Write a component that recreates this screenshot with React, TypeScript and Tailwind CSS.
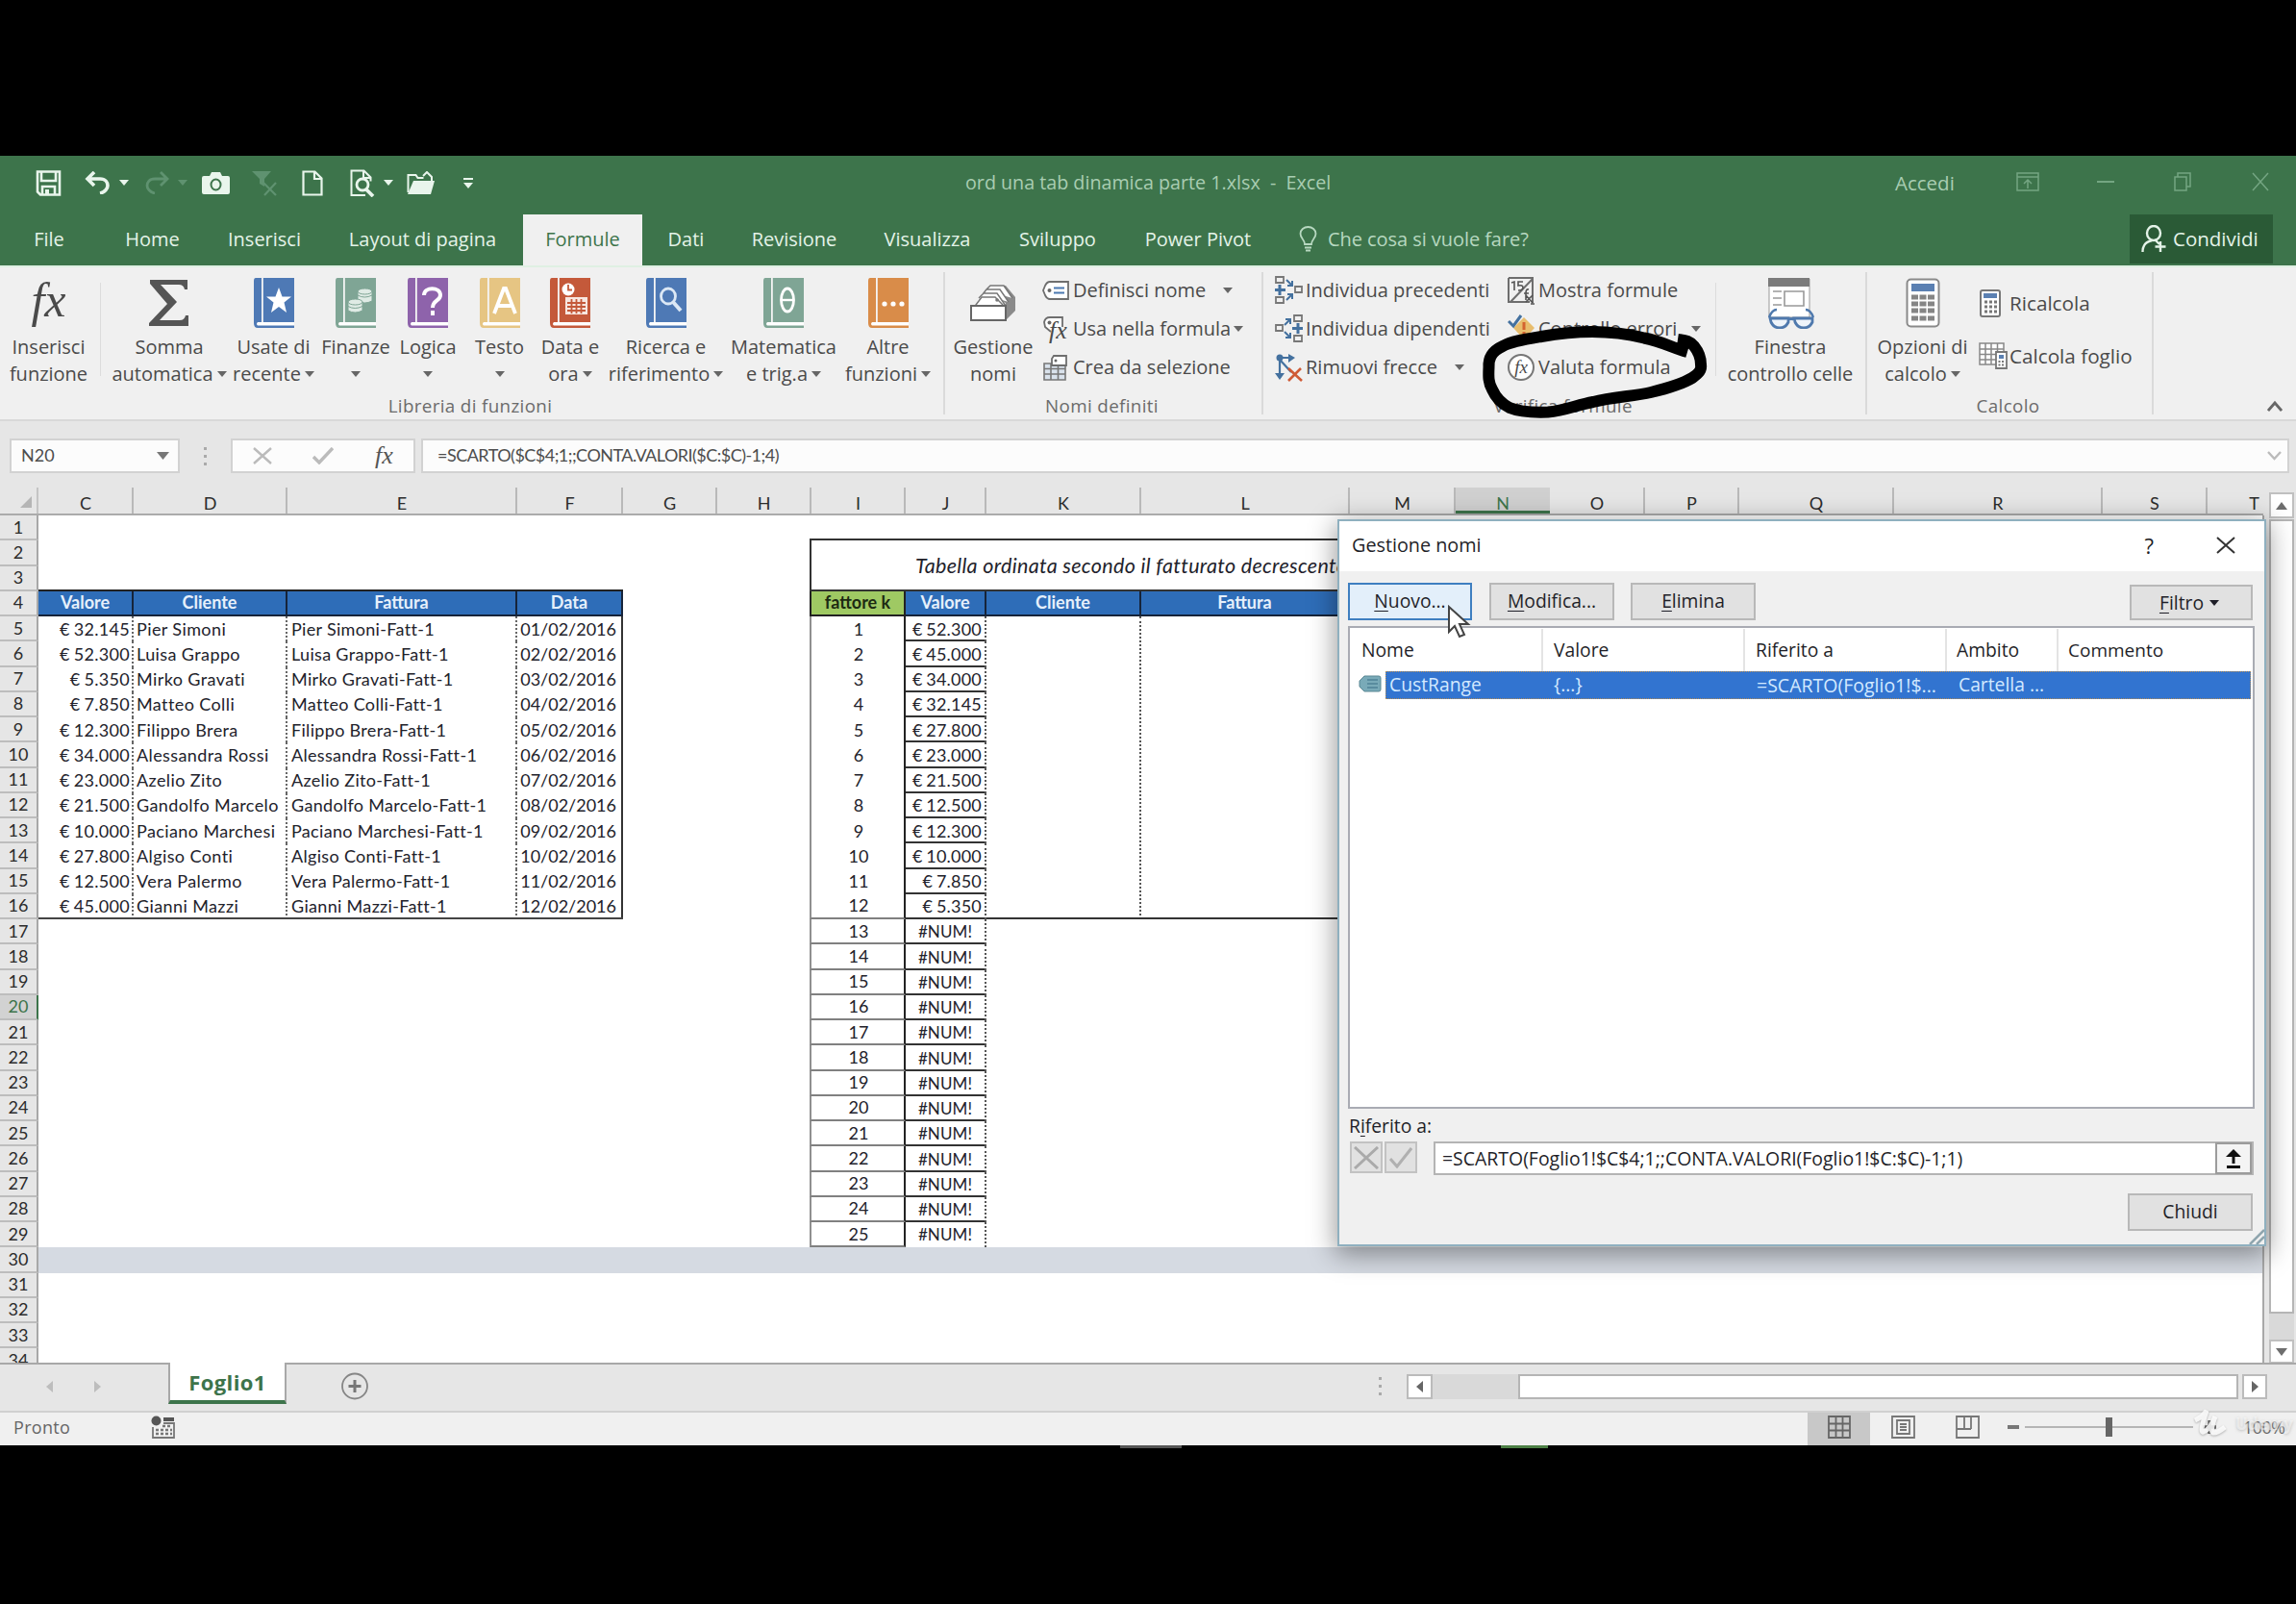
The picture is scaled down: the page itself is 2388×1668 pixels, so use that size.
import type { ReactNode } from "react";

const clients = [
  ["32.145", "Pier Simoni", "01"],
  ["52.300", "Luisa Grappo", "02"],
  ["5.350", "Mirko Gravati", "03"],
  ["7.850", "Matteo Colli", "04"],
  ["12.300", "Filippo Brera", "05"],
  ["34.000", "Alessandra Rossi", "06"],
  ["23.000", "Azelio Zito", "07"],
  ["21.500", "Gandolfo Marcelo", "08"],
  ["10.000", "Paciano Marchesi", "09"],
  ["27.800", "Algiso Conti", "10"],
  ["12.500", "Vera Palermo", "11"],
  ["45.000", "Gianni Mazzi", "12"],
];

const sorted = [
  "52.300",
  "45.000",
  "34.000",
  "32.145",
  "27.800",
  "23.000",
  "21.500",
  "12.500",
  "12.300",
  "10.000",
  "7.850",
  "5.350",
];

const columns = "CDEFGHIJKLMNOPQRST".split("");

const gridCols =
  "grid grid-cols-[40px_99px_160px_239px_110px_98px_98px_98px_84px_161px_217px_110px_98px_99px_98px_161px_217px_109px_58px]";

function Caret({ className = "" }: { className?: string }) {
  return (
    <svg
      width="10"
      height="6"
      viewBox="0 0 10 6"
      className={`shrink-0 ${className}`}
    >
      <path d="M0 0h10L5 6z" fill="currentColor" />
    </svg>
  );
}

/* ---------- title bar ---------- */

function TitleBar() {
  return (
    <div className="flex h-[61px] shrink-0 items-center pb-[5px] text-[#e9f5ec]">
      <div className="flex w-[1004px] items-center pl-[37px]">
        <svg width="27" height="27" viewBox="0 0 27 27" fill="none">
          <path
            d="M2 1.5h23v24H5l-3-3zM6 2v9h15V2M7 25v-8h13v8"
            stroke="currentColor"
            strokeWidth="2.6"
          />
          <path d="M10 20h4v5h-4z" fill="currentColor" />
        </svg>
        <svg
          width="27"
          height="24"
          viewBox="0 0 27 24"
          fill="none"
          className="ml-[24px]"
        >
          <path
            d="M10 1L3 8l7 7M4 8h12c6 0 8 4 8 7s-3 7-8 8"
            stroke="currentColor"
            strokeWidth="3.6"
          />
        </svg>
        <Caret className="ml-[9px]" />
        <svg
          width="27"
          height="24"
          viewBox="0 0 27 24"
          fill="none"
          className="ml-[16px] text-[#5f9270]"
        >
          <path
            d="M17 1l7 7-7 7M23 8H11C5 8 3 12 3 15s3 7 8 8"
            stroke="currentColor"
            strokeWidth="2.8"
          />
        </svg>
        <Caret className="ml-[8px] text-[#5f9270]" />
        <svg width="29" height="23" viewBox="0 0 29 23" className="ml-[15px]">
          <path
            d="M2 4h6l2-4h9l2 4h6q2 0 2 2v15q0 2-2 2H2q-2 0-2-2V6q0-2 2-2z"
            fill="currentColor"
          />
          <ellipse
            cx="14.5"
            cy="13"
            rx="5"
            ry="5.5"
            fill="none"
            stroke="#3d744b"
            strokeWidth="2"
          />
        </svg>
        <svg
          width="28"
          height="27"
          viewBox="0 0 28 27"
          className="ml-[22px] text-[#5f9270]"
        >
          <path d="M1 1h20l-7 8v8l-5-3V9z" fill="currentColor" />
          <path
            d="M13 13l13 13M26 13L14 26"
            stroke="currentColor"
            strokeWidth="2.2"
          />
        </svg>
        <svg
          width="22"
          height="27"
          viewBox="0 0 22 27"
          fill="none"
          className="ml-[25px]"
        >
          <path
            d="M1.5 1.5h12l7 7v17h-19zM13 2v7h7"
            stroke="currentColor"
            strokeWidth="2.2"
          />
        </svg>
        <svg
          width="27"
          height="29"
          viewBox="0 0 27 29"
          fill="none"
          className="ml-[28px]"
        >
          <path
            d="M16 27H1.500V1.500h13l7 7v4M14 2v7h7"
            stroke="currentColor"
            strokeWidth="2"
          />
          <circle cx="13" cy="16" r="6" stroke="currentColor" strokeWidth="2.8" />
          <path d="M17 21l7 7" stroke="currentColor" strokeWidth="3.8" />
        </svg>
        <Caret className="ml-[8px]" />
        <svg width="29" height="24" viewBox="0 0 29 24" className="ml-[14px]">
          <path
            d="M1.500 22V4h8l2 3h6M17 5l4-4 5 5v4"
            fill="none"
            stroke="currentColor"
            strokeWidth="2"
          />
          <path d="M7 10h22l-4 14H1z" fill="currentColor" />
        </svg>
        <svg width="10" height="11" viewBox="0 0 10 11" className="ml-[30px]">
          <path d="M0 0h10v2H0zM0 5h10l-5 6z" fill="currentColor" />
        </svg>
      </div>
      <div className="w-[967px] whitespace-pre text-[19.700px] text-[#a9cdb2]">
        ord una tab dinamica parte 1.xlsx&nbsp; -&nbsp; Excel
      </div>
      <div className="w-[126px] text-[20.500px] text-[#a9cdb2]">Accedi</div>
      <div className="flex flex-1 items-center pb-[3px] text-[#74a582]">
        <svg width="24" height="20" viewBox="0 0 24 20" fill="none">
          <path
            d="M1 1h22v18H1zM1 5h22M12 17V8M8 12l4-4 4 4"
            stroke="currentColor"
            strokeWidth="1.5"
          />
        </svg>
        <div className="ml-[60px] h-[2px] w-[18px] bg-[#74a582]" />
        <svg
          width="18"
          height="20"
          viewBox="0 0 18 20"
          fill="none"
          className="ml-[62px]"
        >
          <path
            d="M1 5h12v14H1zM4 5V1h13v14h-4"
            stroke="currentColor"
            strokeWidth="1.500"
          />
        </svg>
        <svg width="18" height="20" viewBox="0 0 18 20" className="ml-[63px]">
          <path
            d="M1 1l16 18M17 1L1 19"
            stroke="currentColor"
            strokeWidth="1.500"
          />
        </svg>
      </div>
    </div>
  );
}

function Tab({ width, label }: { width: string; label: string }) {
  return (
    <div
      className={`flex shrink-0 items-center justify-center pb-[2px] ${width}`}
    >
      {label}
    </div>
  );
}

function Tabs() {
  return (
    <div className="flex h-[53px] shrink-0 whitespace-nowrap text-[20px] text-[#e4f3e8]">
      <Tab width="w-[102px]" label="File" />
      <Tab width="w-[113px]" label="Home" />
      <Tab width="w-[120px]" label="Inserisci" />
      <Tab width="w-[209px]" label="Layout di pagina" />
      <div className="flex w-[124px] items-center justify-center bg-[#f0f0f0] pb-[2px] text-[#3d744b]">
        Formule
      </div>
      <Tab width="w-[91px]" label="Dati" />
      <Tab width="w-[134px]" label="Revisione" />
      <Tab width="w-[143px]" label="Visualizza" />
      <Tab width="w-[128px]" label="Sviluppo" />
      <Tab width="w-[164px]" label="Power Pivot" />
      <div className="flex flex-1 items-center pb-[2px] pl-[23px] text-[#b7d8c0]">
        <svg width="19" height="27" viewBox="0 0 19 27" fill="none">
          <path
            d="M6 19c0-5-4.500-6-4.500-11a8 7 0 0 1 16 0c0 5-4.500 6-4.500 11zM6 22.500h7M7 25.500h5"
            stroke="currentColor"
            strokeWidth="1.800"
          />
        </svg>
        <span className="ml-[11px] tracking-[-0.060px]">
          Che cosa si vuole fare?
        </span>
      </div>
      <div className="mr-[24px] flex h-[51px] w-[149px] items-center bg-[#2a5a36] pb-[1px] pl-[12px]">
        <svg width="26" height="29" viewBox="0 0 26 29" fill="none">
          <ellipse
            cx="13"
            cy="8.500"
            rx="7"
            ry="7.500"
            stroke="currentColor"
            strokeWidth="2.400"
          />
          <path
            d="M1.500 28c0-7 4-11 10-12M14 15l5 5M20 17v11M14.500 22.500h11"
            stroke="currentColor"
            strokeWidth="2.400"
          />
        </svg>
        <span className="ml-[7px] text-[20.500px]">Condividi</span>
      </div>
    </div>
  );
}

/* ---------- ribbon ---------- */

function BigButton({
  width,
  icon,
  top,
  bottom,
  caret,
}: {
  width: string;
  icon: ReactNode;
  top: string;
  bottom?: string;
  caret?: boolean;
}) {
  return (
    <div
      className={`flex shrink-0 flex-col items-center pt-[11px] whitespace-nowrap ${width}`}
    >
      <div className="flex h-[51px] items-center justify-center">{icon}</div>
      <div className="mt-[7px] h-[28px] leading-[28px]">{top}</div>
      <div className="flex h-[28px] items-center leading-[28px]">
        {bottom}
        {caret && (
          <Caret className={bottom ? "ml-[4px] text-[#666]" : "text-[#666]"} />
        )}
      </div>
    </div>
  );
}

function Book({ color, children }: { color: string; children: ReactNode }) {
  return (
    <svg width="44" height="52" viewBox="0 0 44 52">
      <path d="M3 0h40v52H5q-4 0-4-5V3q0-3 2-3z" fill={color} />
      <path d="M9 0h1.800v46H9z" fill="#f4f4f4" />
      <path d="M5 46h38v3.600H5q-2-1.800 0-3.600z" fill="#fff" />
      {children}
    </svg>
  );
}

function Separator({ short }: { short?: boolean }) {
  return (
    <div
      className={
        short
          ? "mt-[16px] h-[97px] w-px shrink-0 bg-[#dcdcdc]"
          : "mt-[5px] h-[148px] w-[2px] shrink-0 bg-[#dadada]"
      }
    />
  );
}

function SmallRow({
  icon,
  label,
  caret,
}: {
  icon: ReactNode;
  label: string;
  caret?: string;
}) {
  return (
    <div className="flex h-[40px] items-center">
      <div className="flex w-[32px] shrink-0 items-center">{icon}</div>
      <span className="leading-[28px]">{label}</span>
      {caret && <Caret className={`text-[#666] ${caret}`} />}
    </div>
  );
}

function GroupLabel({ children }: { children: ReactNode }) {
  return (
    <div className="flex h-[28px] items-center justify-center pr-[3px] text-[18.800px] tracking-[0.350px] text-[#6b6b6b]">
      {children}
    </div>
  );
}

function PrecedentIcon({ flip }: { flip?: boolean }) {
  return (
    <svg width="29" height="30" viewBox="0 0 29 30" fill="none">
      <g transform={flip ? "matrix(-1 0 0 1 29 0)" : undefined}>
        <path
          d="M1 1h8v6H1zM1 22h8v6H1zM21 11h7v6h-7z"
          stroke="#777"
          strokeWidth="1.800"
        />
        <path d="M5 9v11M0 14.500h11" stroke="#44719f" strokeWidth="3" />
        <path
          d={
            flip
              ? "M19 11l-6-6M13 10V5h5M19 18l-6 6M13 19v5h5"
              : "M12 4l6 6M18 5v5h-5M12 25l6-6M18 24v-5h-5"
          }
          stroke="#44719f"
          strokeWidth="2"
        />
      </g>
    </svg>
  );
}

function Ribbon() {
  return (
    <div className="flex h-[160px] shrink-0 border-t-2 border-[#dff0e3] bg-[#f0f0f0] text-[20px] text-[#4a4a4a]">
      {/* Libreria di funzioni */}
      <div className="flex w-[981px] shrink-0 flex-col">
        <div className="flex h-[131px]">
          <BigButton
            width="w-[101px]"
            top="Inserisci"
            bottom="funzione"
            icon={
              <span className="pb-[6px] text-[50px] leading-[50px] italic [font-family:'Liberation_Serif',serif]">
                fx
              </span>
            }
          />
          <div className="w-[3px] shrink-0" />
          <Separator short />
          <BigButton
            width="w-[142px]"
            top="Somma"
            bottom="automatica"
            caret
            icon={
              <svg width="42" height="48" viewBox="0 0 42 48">
                <path
                  d="M1 0h39v10h-3q-1-5-6-5H12l17 18-18 19h21q5 0 6-5h3v11H0v-3l19-20L1 4z"
                  fill="#555"
                />
              </svg>
            }
          />
          <BigButton
            width="w-[75px]"
            top="Usate di"
            bottom="recente"
            caret
            icon={
              <Book color="#4e79b5">
                <path
                  d="M27 10l3.500 9.500H40l-7.500 6L35 36l-8-6-8 6 2.500-10.500-7.500-6h9.500z"
                  fill="#fff"
                />
              </Book>
            }
          />
          <BigButton
            width="w-[96px]"
            top="Finanze"
            caret
            icon={
              <Book color="#7fa595">
                <g fill="#dfebe5" stroke="#7fa595">
                  <path d="M24 14v10q7 4 15 0V14z" />
                  <ellipse cx="31.500" cy="14" rx="7.500" ry="3" />
                  <path d="M24 18q7 4 15 0" fill="none" />
                  <path d="M14 25v9q7 4 15 0v-9z" />
                  <ellipse cx="21.500" cy="25" rx="7.500" ry="3" />
                  <path d="M14 29.500q7 4 15 0" fill="none" />
                </g>
              </Book>
            }
          />
          <BigButton
            width="w-[54px]"
            top="Logica"
            caret
            icon={
              <Book color="#8e63ab">
                <path
                  d="M18 18c0-9 17-9 17 0 0 6-8 5-8 13M27 34v5"
                  fill="none"
                  stroke="#fff"
                  strokeWidth="4"
                />
              </Book>
            }
          />
          <BigButton
            width="w-[95px]"
            top="Testo"
            caret
            icon={
              <Book color="#e6c583">
                <path
                  d="M16 37l10-26h2l10 26M19 29h16"
                  fill="none"
                  stroke="#fff"
                  strokeWidth="3.800"
                />
              </Book>
            }
          />
          <BigButton
            width="w-[52px]"
            top="Data e"
            bottom="ora"
            caret
            icon={
              <Book color="#c4593a">
                <path d="M17 20h23v18H17z" fill="#f7e6df" />
                <path
                  d="M19 26h19M19 30h19M19 34h19M23.500 22v15M28.500 22v15M33.500 22v15"
                  stroke="#c4593a"
                  strokeWidth="1.800"
                />
                <circle cx="20" cy="12" r="6.500" fill="#fff" />
                <path
                  d="M20 7v5.500h4"
                  fill="none"
                  stroke="#c4593a"
                  strokeWidth="1.800"
                />
              </Book>
            }
          />
          <BigButton
            width="w-[147px]"
            top="Ricerca e"
            bottom="riferimento"
            caret
            icon={
              <Book color="#4e79b5">
                <ellipse
                  cx="24"
                  cy="19"
                  rx="7.500"
                  ry="8"
                  fill="none"
                  stroke="#dce8f5"
                  strokeWidth="2.800"
                />
                <path d="M29 25l8 9" stroke="#dce8f5" strokeWidth="4" />
              </Book>
            }
          />
          <BigButton
            width="w-[98px]"
            top="Matematica"
            bottom="e trig.a"
            caret
            icon={
              <Book color="#7fa595">
                <ellipse
                  cx="26"
                  cy="23"
                  rx="6.500"
                  ry="12"
                  fill="none"
                  stroke="#fff"
                  strokeWidth="2.800"
                />
                <path d="M20 23h12" stroke="#fff" strokeWidth="2.400" />
              </Book>
            }
          />
          <BigButton
            width="w-[119px]"
            top="Altre"
            bottom="funzioni"
            caret
            icon={
              <Book color="#d98c49">
                <g fill="#fff">
                  <circle cx="18" cy="27" r="2.600" />
                  <circle cx="27" cy="27" r="2.600" />
                  <circle cx="36" cy="27" r="2.600" />
                </g>
              </Book>
            }
          />
        </div>
        <GroupLabel>Libreria di funzioni</GroupLabel>
      </div>
      <Separator />

      {/* Nomi definiti */}
      <div className="flex w-[329px] shrink-0 flex-col">
        <div className="flex h-[131px]">
          <BigButton
            width="w-[100px]"
            top="Gestione"
            bottom="nomi"
            icon={
              <svg width="50" height="40" viewBox="0 0 50 40">
                <path d="M17 9l5-7h16l10 12v14L38 38V20z" fill="#8a8a8a" />
                <path
                  d="M17 7l5-5h14l9 13M14 11l4-5h14l9 13M10 15l5-5h14l9 13"
                  fill="#fff"
                  stroke="#777"
                  strokeWidth="1.500"
                />
                <path
                  d="M7 22l6-8h14l8 8v4H7z"
                  fill="#fff"
                  stroke="#777"
                  strokeWidth="1.500"
                />
                <path
                  d="M2 23h36v15H2z"
                  fill="#fff"
                  stroke="#666"
                  strokeWidth="2"
                />
                <circle cx="29" cy="17" r="1.800" fill="#777" />
              </svg>
            }
          />
          <div className="flex flex-col pt-[4px] pl-[1px] whitespace-nowrap">
            <SmallRow
              label="Definisci nome"
              caret="ml-[18px]"
              icon={
                <svg width="29" height="22" viewBox="0 0 29 22">
                  <path
                    d="M8 2h19v18H8q-3 0-5-4l-2-5 2-5q2-4 5-4z"
                    fill="#fff"
                    stroke="#6e6e6e"
                    strokeWidth="1.800"
                  />
                  <circle cx="7.500" cy="11" r="2" fill="#666" />
                  <path
                    d="M12 8.500h11M12 13.500h11"
                    stroke="#4a78b0"
                    strokeWidth="2"
                  />
                </svg>
              }
            />
            <SmallRow
              label="Usa nella formula"
              caret="ml-[3px]"
              icon={
                <div className="relative h-[29px] w-[29px]">
                  <svg width="29" height="29" viewBox="0 0 29 29">
                    <path
                      d="M9 17l-6-5-1-5q1-5 6-5h13v10"
                      fill="#fff"
                      stroke="#6e6e6e"
                      strokeWidth="1.800"
                    />
                    <circle cx="7.500" cy="7.500" r="2" fill="#666" />
                  </svg>
                  <span className="absolute top-[3px] left-[7px] text-[26px] leading-[25px] italic [font-family:'Liberation_Serif',serif]">
                    fx
                  </span>
                </div>
              }
            />
            <SmallRow
              label="Crea da selezione"
              icon={
                <svg width="27" height="27" viewBox="0 0 27 27">
                  <path
                    d="M2 9h22v17H2zM2 14.500h22M2 20h22M9 9v17M16.500 9v17"
                    fill="#d9e2ec"
                    stroke="#777"
                    strokeWidth="1.600"
                  />
                  <path
                    d="M12 1h13v10H10V4z"
                    fill="#fff"
                    stroke="#6e6e6e"
                    strokeWidth="1.800"
                  />
                  <circle cx="14" cy="6" r="1.500" fill="#666" />
                </svg>
              }
            />
          </div>
        </div>
        <GroupLabel>Nomi definiti</GroupLabel>
      </div>
      <Separator />

      {/* Verifica formule */}
      <div className="flex w-[626px] shrink-0 flex-col">
        <div className="flex h-[131px] whitespace-nowrap">
          <div className="flex w-[241px] shrink-0 flex-col pt-[4px] pl-[12px]">
            <SmallRow label="Individua precedenti" icon={<PrecedentIcon />} />
            <SmallRow
              label="Individua dipendenti"
              icon={<PrecedentIcon flip />}
            />
            <SmallRow
              label="Rimuovi frecce"
              caret="ml-[18px]"
              icon={
                <svg width="29" height="29" viewBox="0 0 29 29" fill="none">
                  <path
                    d="M5 4v21M5 4h13M5 6l12 13"
                    stroke="#44719f"
                    strokeWidth="2.200"
                  />
                  <path d="M0 20h10l-5 7zM14 0l7 4-7 5z" fill="#44719f" />
                  <circle cx="5" cy="4" r="3.500" fill="#44719f" />
                  <path
                    d="M14 15l14 13M27 15L14 28"
                    stroke="#cf5a35"
                    strokeWidth="2.600"
                  />
                </svg>
              }
            />
          </div>
          <div className="flex w-[229px] shrink-0 flex-col pt-[4px] pl-[13px]">
            <SmallRow
              label="Mostra formule"
              icon={
                <svg width="29" height="29" viewBox="0 0 29 29" fill="none">
                  <path
                    d="M1 1h25v26M1 1v25h22M3 26L26 2"
                    stroke="#6e6e6e"
                    strokeWidth="2"
                  />
                  <path
                    d="M4 6l3-1v9M16 5h-5v4q5-1 5 2t-5 3M22 13q-3-1-3 4v7M17 17h5M19 19l7 8M26 19l-7 7M24 28h4"
                    stroke="#555"
                    strokeWidth="1.600"
                  />
                </svg>
              }
            />
            <SmallRow
              label="Controllo errori"
              caret="ml-[15px]"
              icon={
                <svg width="29" height="30" viewBox="0 0 29 30" fill="none">
                  <path d="M17 3l11 11-11 12L6 14z" fill="#e8bd6d" />
                  <path d="M17 8v8M17 18v3" stroke="#d3622f" strokeWidth="3" />
                  <path d="M1 7l5 5 8-11" stroke="#44719f" strokeWidth="3" />
                </svg>
              }
            />
            <SmallRow
              label="Valuta formula"
              icon={
                <div className="flex h-[28px] w-[28px] items-center justify-center rounded-full border-2 border-[#777] bg-white">
                  <span className="text-[19px] leading-[20px] italic [font-family:'Liberation_Serif',serif]">
                    fx
                  </span>
                </div>
              }
            />
          </div>
          <Separator short />
          <BigButton
            width="w-[154px]"
            top="Finestra"
            bottom="controllo celle"
            icon={
              <svg width="52" height="54" viewBox="0 0 52 54" fill="none">
                <path d="M4 2h42v40H4z" fill="#fff" stroke="#999" />
                <path d="M3 1h43v9H3z" fill="#7b7b7b" />
                <path
                  d="M8 15h9M8 22h9M8 29h9M20 15h20v15H20z"
                  stroke="#999"
                  strokeWidth="1.600"
                />
                <path
                  d="M4 42q3-8 8-8M50 42q-3-8-8-8"
                  stroke="#4f79ad"
                  strokeWidth="2.400"
                />
                <path
                  d="M5 43h19v4q-3 6-9 6t-9-6zM30 43h19v4q-3 6-9 6t-9-6zM23 45q4-3 8 0"
                  fill="#eef4fa"
                  stroke="#4f79ad"
                  strokeWidth="2.800"
                />
              </svg>
            }
          />
        </div>
        <GroupLabel>Verifica formule</GroupLabel>
      </div>
      <Separator />

      {/* Calcolo */}
      <div className="flex w-[296px] shrink-0 flex-col whitespace-nowrap">
        <div className="flex h-[131px]">
          <BigButton
            width="w-[115px]"
            top="Opzioni di"
            bottom="calcolo"
            caret
            icon={
              <svg width="36" height="52" viewBox="0 0 36 52" fill="none">
                <rect
                  x="1.500"
                  y="1.500"
                  width="33"
                  height="49"
                  rx="4"
                  fill="#fff"
                  stroke="#8a8a8a"
                  strokeWidth="2"
                />
                <path d="M6 6h24v8H6z" fill="#5b80b2" />
                <path
                  d="M6 20h24M6 27h24M6 34h24M6 42h24"
                  stroke="#858585"
                  strokeWidth="5"
                  strokeDasharray="7 1.500"
                />
              </svg>
            }
          />
          <div className="flex flex-col pt-[17px] pl-[1px] text-[20.700px]">
            <SmallRow
              label="Ricalcola"
              icon={
                <svg width="24" height="29" viewBox="0 0 24 29" fill="none">
                  <rect
                    x="2"
                    y="1"
                    width="20"
                    height="27"
                    rx="2"
                    fill="#fff"
                    stroke="#777"
                    strokeWidth="2"
                  />
                  <path d="M5 4h14v5H5z" fill="#5b80b2" />
                  <path
                    d="M6 13h14M6 18h14M6 23h14"
                    stroke="#777"
                    strokeWidth="3"
                    strokeDasharray="3 2"
                  />
                </svg>
              }
            />
            <div className="h-[15px]" />
            <SmallRow
              label="Calcola foglio"
              icon={
                <svg width="30" height="28" viewBox="0 0 30 28" fill="none">
                  <path
                    d="M1 1h25v22H1zM1 7h25M1 12.500h25M1 18h25M7 1v22M13 1v22M19.500 1v22"
                    fill="#fff"
                    stroke="#888"
                    strokeWidth="1.500"
                  />
                  <path
                    d="M18 10h11v17H18z"
                    fill="#fff"
                    stroke="#777"
                    strokeWidth="1.800"
                  />
                  <path d="M21 13h5v4h-5z" fill="#5b80b2" />
                  <path
                    d="M20.500 20h6M20.500 23.500h6"
                    stroke="#777"
                    strokeWidth="1.800"
                    strokeDasharray="2 1.500"
                  />
                </svg>
              }
            />
          </div>
        </div>
        <GroupLabel>Calcolo</GroupLabel>
      </div>
      <Separator />
      <div className="flex flex-1 items-end justify-end pr-[14px] pb-[8px]">
        <svg width="16" height="12" viewBox="0 0 16 12" fill="none">
          <path d="M1 11l7-8 7 8" stroke="#666" strokeWidth="2.800" />
        </svg>
      </div>
    </div>
  );
}

function FormulaBar() {
  return (
    <div className="flex h-[71px] shrink-0 items-start border-t-2 border-[#d8d8d8] pt-[18px] pl-[10px] text-[18px] text-[#4d4d4d] [font-family:Lato,sans-serif]">
      <div className="flex h-[36px] w-[177px] items-center justify-between border-2 border-[#d2d2d2] bg-[#fcfcfc] pr-[9px] pb-[1px] pl-[10px]">
        N20
        <svg width="13" height="8" viewBox="0 0 13 8">
          <path d="M0 0h13L6.500 8z" fill="#777" />
        </svg>
      </div>
      <div className="ml-[25px] flex h-[36px] flex-col justify-center gap-[5px]">
        <div className="h-[3px] w-[3px] bg-[#aaa]" />
        <div className="h-[3px] w-[3px] bg-[#aaa]" />
        <div className="h-[3px] w-[3px] bg-[#aaa]" />
      </div>
      <div className="ml-[25px] flex h-[36px] w-[192px] items-center border-2 border-[#d2d2d2] bg-[#fcfcfc] pb-[1px] pl-[21px]">
        <svg width="20" height="18" viewBox="0 0 20 18">
          <path d="M1 1l18 16M19 1L1 17" stroke="#bbb" strokeWidth="2.400" />
        </svg>
        <svg
          width="22"
          height="18"
          viewBox="0 0 22 18"
          fill="none"
          className="ml-[42px]"
        >
          <path d="M1 10l6 6L21 1" stroke="#bbb" strokeWidth="3.400" />
        </svg>
        <span className="ml-[43px] text-[26px] leading-[26px] text-[#555] italic [font-family:'Liberation_Serif',serif]">
          fx
        </span>
      </div>
      <div className="ml-[6px] flex h-[36px] w-[1943px] items-center justify-between border-2 border-[#d2d2d2] bg-[#fcfcfc] pr-[6px] pb-[1px] pl-[15px]">
        <span className="tracking-[-0.520px]">
          =SCARTO($C$4;1;;CONTA.VALORI($C:$C)-1;4)
        </span>
        <svg width="15" height="10" viewBox="0 0 15 10" fill="none">
          <path d="M1 1l6.500 7L14 1" stroke="#bbb" strokeWidth="2.400" />
        </svg>
      </div>
    </div>
  );
}

/* ---------- worksheet ---------- */

function Cell({
  col,
  row,
  cols = 1,
  rows = 1,
  className = "",
  children,
}: {
  col: number;
  row: number;
  cols?: number;
  rows?: number;
  className?: string;
  children?: ReactNode;
}) {
  return (
    <div
      className={`flex items-center whitespace-nowrap ${className}`}
      style={{
        gridColumn: `${col} / span ${cols}`,
        gridRow: `${row} / span ${rows}`,
      }}
    >
      {children}
    </div>
  );
}

const headCell =
  "justify-center border-r-2 border-b-2 border-[#16243a] bg-[#2e6db8] font-bold text-[#e6f0fb]";

function Sheet() {
  return (
    <div className="flex h-[881px] w-[2355px] shrink-0 flex-col overflow-hidden border-r-2 border-[#a8a8a8] bg-white text-[18px] text-[#22222b] [font-family:Lato,sans-serif]">
      <div className={`${gridCols} auto-rows-[26.250px]`}>
        {Array.from({ length: 34 }, (_, i) => (
          <Cell
            key={i}
            col={1}
            row={i + 1}
            className={
              i === 19
                ? "justify-center border-r-2 border-b-2 border-r-[#3d744b] border-b-[#bdbdbd] bg-[#d2d2d2] text-[#3d744b]"
                : "justify-center border-r-2 border-b-2 border-r-[#a8a8a8] border-b-[#bdbdbd] bg-[#e6e6e6] text-[#2c2c2c]"
            }
          >
            {i + 1}
          </Cell>
        ))}

        {/* source table */}
        <Cell col={2} row={3} cols={4} className="border-b-2 border-[#222]" />
        <Cell col={2} row={4} className={headCell}>
          Valore
        </Cell>
        <Cell col={3} row={4} className={headCell}>
          Cliente
        </Cell>
        <Cell col={4} row={4} className={headCell}>
          Fattura
        </Cell>
        <Cell col={5} row={4} className={headCell}>
          Data
        </Cell>
        {clients.map(([value, name, day], i) => (
          <div key={name} className="contents">
            <Cell
              col={2}
              row={i + 5}
              className="justify-end border-r-2 border-dotted border-[#666] pr-[2px] tracking-[0.300px] [word-spacing:-1px]"
            >
              € {value}
            </Cell>
            <Cell
              col={3}
              row={i + 5}
              className="border-r-2 border-dotted border-[#666] pl-[3px] tracking-[0.400px]"
            >
              {name}
            </Cell>
            <Cell
              col={4}
              row={i + 5}
              className="border-r-2 border-dotted border-[#666] pl-[4px] tracking-[0.320px]"
            >
              {name}-Fatt-1
            </Cell>
            <Cell
              col={5}
              row={i + 5}
              className="justify-end border-r-2 border-[#333] pr-[5px]"
            >
              {day}/02/2016
            </Cell>
          </div>
        ))}
        <Cell col={2} row={16} cols={4} className="border-b-2 border-[#444]" />

        {/* ordered table */}
        <Cell
          col={8}
          row={2}
          cols={5}
          rows={2}
          className="-mt-[2px] -ml-[2px] overflow-hidden border-2 border-[#333] pt-[2px] pl-[108px] text-[21.500px] tracking-[0.320px] italic"
        >
          Tabella ordinata secondo il fatturato decrescente
        </Cell>
        <Cell
          col={8}
          row={4}
          className="-ml-[2px] justify-center border-r-2 border-b-2 border-l-2 border-[#222] bg-[#9fc963] font-bold text-[#1d2a12]"
        >
          fattore k
        </Cell>
        <Cell col={9} row={4} className={headCell}>
          Valore
        </Cell>
        <Cell col={10} row={4} className={headCell}>
          Cliente
        </Cell>
        <Cell col={11} row={4} className={headCell}>
          Fattura
        </Cell>
        <Cell col={12} row={4} className={headCell} />
        {Array.from({ length: 25 }, (_, i) => (
          <div key={i} className="contents">
            <Cell
              col={8}
              row={i + 5}
              className={
                i < 11
                  ? "-ml-[2px] justify-center border-r-2 border-l-2 border-r-[#222] border-l-[#909090] pl-[2px]"
                  : "-ml-[2px] justify-center border-r-2 border-b-2 border-l-2 border-r-[#222] border-b-[#808080] border-l-[#909090] pl-[2px]"
              }
            >
              {i + 1}
            </Cell>
            <Cell
              col={9}
              row={i + 5}
              className={i < 24 ? "border-b-2 border-[#333]" : ""}
            />
            <Cell
              col={9}
              row={i + 5}
              className={
                i < 12
                  ? "justify-end border-r-2 border-dotted border-[#555] pr-[3px] tracking-[0.200px] [word-spacing:-1px]"
                  : "justify-center border-r-2 border-dotted border-[#555] text-[17px] tracking-[0.100px]"
              }
            >
              {i < 12 ? `€ ${sorted[i]}` : "#NUM!"}
            </Cell>
          </div>
        ))}
        <Cell
          col={10}
          row={5}
          rows={12}
          className="border-r-2 border-dotted border-[#555]"
        />
        <Cell col={10} row={16} cols={3} className="border-b-2 border-[#333]" />

        <Cell col={2} row={30} cols={18} className="bg-[#d5dae2]" />
      </div>
    </div>
  );
}

function ColumnHeaders() {
  return (
    <div
      className={`${gridCols} h-[29px] w-[2354px] shrink-0 grid-rows-[27px] border-b-2 border-[#ababab] text-[18px] leading-[18px] text-[#2c2c2c] [font-family:Lato,sans-serif]`}
    >
      <div className="flex items-end justify-end border-r-2 border-[#c4c4c4] pr-[5px] pb-[6px]">
        <svg width="12" height="12" viewBox="0 0 12 12">
          <path d="M12 0v12H0z" fill="#b5b5b5" />
        </svg>
      </div>
      {columns.map((c) => (
        <div
          key={c}
          className={
            c === "N"
              ? "flex items-center justify-center border-b-[3px] border-[#3d744b] bg-[#d0d0d0] pt-[7px] text-[#3d744b]"
              : c === "T"
                ? "flex items-center justify-end pt-[4px] pr-[4px]"
                : "flex items-center justify-center border-r-2 border-[#b9b9b9] pt-[4px] pl-[1px]"
          }
        >
          {c}
        </div>
      ))}
    </div>
  );
}

function VerticalScroll() {
  return (
    <div className="flex w-[26px] flex-col">
      <div className="flex h-[27px] shrink-0 items-center justify-center border-2 border-[#c0c0c0] bg-white">
        <svg width="12" height="8" viewBox="0 0 12 8">
          <path d="M0 8h12L6 0z" fill="#6e6e6e" />
        </svg>
      </div>
      <div className="mt-px h-[826px] shrink-0 border-2 border-[#b5b5b5] bg-white" />
      <div className="h-[27px] shrink-0 bg-[#d9d9d9]" />
      <div className="flex h-[25px] shrink-0 items-center justify-center border-2 border-[#c0c0c0] bg-white">
        <svg width="12" height="8" viewBox="0 0 12 8">
          <path d="M0 0h12L6 8z" fill="#6e6e6e" />
        </svg>
      </div>
    </div>
  );
}

function SheetTabs() {
  return (
    <div className="flex h-[50px] shrink-0">
      <div className="flex w-[175px] items-center border-t-2 border-[#a8a8a8] pb-[3px] pl-[48px]">
        <svg width="7" height="12" viewBox="0 0 7 12">
          <path d="M7 0v12L0 6z" fill="#bdbdbd" />
        </svg>
        <svg width="7" height="12" viewBox="0 0 7 12" className="ml-[43px]">
          <path d="M0 0v12l7-6z" fill="#bdbdbd" />
        </svg>
      </div>
      <div className="flex h-[43px] w-[123px] items-center justify-center border-x-2 border-b-4 border-x-[#a8a8a8] border-b-[#3d744b] bg-white pt-[2px] text-[22px] font-bold tracking-[0.400px] text-[#3d744b]">
        Foglio1
      </div>
      <div className="flex flex-1 items-center border-t-2 border-[#a8a8a8] pb-[3px] pl-[56px]">
        <svg width="30" height="29" viewBox="0 0 30 29" fill="none">
          <circle cx="15" cy="14.500" r="13" stroke="#868686" strokeWidth="1.800" />
          <path d="M15 8v13M8.500 14.500h13" stroke="#777" strokeWidth="3" />
        </svg>
        <div className="ml-[1050px] flex flex-col gap-[5px]">
          <div className="h-[3px] w-[3px] bg-[#aaa]" />
          <div className="h-[3px] w-[3px] bg-[#aaa]" />
          <div className="h-[3px] w-[3px] bg-[#aaa]" />
        </div>
        <div className="ml-[26px] flex h-[26px] w-[27px] items-center justify-center border-2 border-[#bbb] bg-white">
          <svg width="7" height="12" viewBox="0 0 7 12">
            <path d="M7 0v12L0 6z" fill="#666" />
          </svg>
        </div>
        <div className="h-[26px] w-[89px] bg-[#d9d9d9]" />
        <div className="h-[26px] w-[749px] border-2 border-[#b5b5b5] bg-white" />
        <div className="ml-[4px] flex h-[26px] w-[26px] items-center justify-center border-2 border-[#bbb] bg-white">
          <svg width="7" height="12" viewBox="0 0 7 12">
            <path d="M0 0v12l7-6z" fill="#666" />
          </svg>
        </div>
      </div>
    </div>
  );
}

function StatusBar() {
  return (
    <div className="relative flex h-[36px] shrink-0 items-center border-t-2 border-[#d0d0d0] bg-[#f0f0f0] pb-[4px] text-[18px] text-[#666]">
      <span className="w-[157px] pl-[14px] tracking-[0.300px]">Pronto</span>
      <svg width="25" height="24" viewBox="0 0 25 24" fill="none">
        <circle cx="5.500" cy="5.500" r="5" fill="#555" />
        <path d="M13 2h11v4H13z" fill="#555" />
        <path d="M2 12v11h22V8H13" stroke="#777" strokeWidth="1.800" />
        <path
          d="M5 15h17M5 19h17M12 11h10"
          stroke="#777"
          strokeWidth="2.400"
          strokeDasharray="3 2"
        />
      </svg>
      <div className="-mb-[4px] ml-[1698px] flex w-[65px] items-center justify-center self-stretch bg-[#c8c8c8] pb-[4px]">
        <svg width="24" height="24" viewBox="0 0 24 24" fill="none">
          <path
            d="M1 1h22v22H1zM1 8.500h22M1 15.500h22M8.500 1v22M15.500 1v22"
            stroke="#666"
            strokeWidth="1.800"
          />
        </svg>
      </div>
      <svg
        width="25"
        height="24"
        viewBox="0 0 25 24"
        fill="none"
        className="ml-[22px]"
      >
        <path
          d="M1 1h23v22H1zM6 5h13v14H6zM9 9h7M9 12h7M9 15h7"
          stroke="#777"
          strokeWidth="1.800"
        />
      </svg>
      <svg
        width="25"
        height="24"
        viewBox="0 0 25 24"
        fill="none"
        className="ml-[42px]"
      >
        <path
          d="M1 1h23v22H1zM9 1v13M16 1v13M1 14h15"
          stroke="#777"
          strokeWidth="1.800"
        />
      </svg>
      <div className="ml-[29px] h-[4px] w-[12px] bg-[#777]" />
      <div className="ml-[6px] h-[2px] w-[84px] bg-[#b5b5b5]" />
      <div className="h-[20px] w-[7px] bg-[#666]" />
      <div className="h-[2px] w-[84px] bg-[#b5b5b5]" />
      <svg width="14" height="14" viewBox="0 0 14 14" className="ml-[10px]">
        <path d="M7 0v14M0 7h14" stroke="#666" strokeWidth="3.500" />
      </svg>
      <span className="ml-[28px] tracking-[-0.600px]">100%</span>
      {/* video watermark */}
      <div className="absolute top-[-5px] left-[2280px] flex items-center gap-[7px] [text-shadow:0_1px_3px_#9998]">
        <svg
          width="38"
          height="30"
          viewBox="0 0 38 30"
          fill="none"
          className="drop-shadow-[0_1px_1px_rgba(0,0,0,0.3)]"
        >
          <path
            d="M3 13q7-3 12-10-8 24-3 22 6-2 12-16-6 16-2 17 5 0 12-6"
            stroke="#fff"
            strokeOpacity=".85"
            strokeWidth="5"
          />
        </svg>
        <span className="pt-[4px] text-[17px] font-bold text-white/50">
          Udemy
        </span>
      </div>
    </div>
  );
}

/* ---------- names dialog ---------- */

function NamesDialog() {
  return (
    <div className="absolute top-[540px] left-[1391px] flex h-[756px] w-[966px] flex-col border-2 border-[#8fb0bf] bg-[#f0f0f0] text-[19.300px] text-[#1f1f28] shadow-[0_6px_26px_2px_rgba(0,0,0,0.4)]">
      <div className="flex h-[52px] shrink-0 items-center bg-white pb-[2px] pl-[13px]">
        <span className="flex-1 text-[19.800px]">Gestione nomi</span>
        <span className="mr-[65px] text-[22px]">?</span>
        <svg width="20" height="18" viewBox="0 0 20 18" className="mr-[30px]">
          <path d="M1 1l18 16M19 1L1 17" stroke="#333" strokeWidth="2" />
        </svg>
      </div>
      <div className="mt-[12px] flex shrink-0 items-end pl-[9px]">
        <div className="relative flex h-[39px] w-[129px] items-center justify-center border-2 border-[#3f7fc0] bg-[#e3effa]">
          <span>
            <u className="underline-offset-[3px]">N</u>uovo...
          </span>
          <svg
            width="26"
            height="36"
            viewBox="0 0 26 36"
            className="absolute top-[21px] left-[101px] z-10"
          >
            <path
              d="M2 2v26l6-6 5 11 5-2-5-11h9z"
              fill="#fff"
              stroke="#444"
              strokeWidth="2"
            />
          </svg>
        </div>
        <div className="ml-[18px] flex h-[39px] w-[130px] items-center justify-center border-2 border-[#b8b8b8] bg-[#e1e1e1]">
          <span>
            <u className="underline-offset-[3px]">M</u>odifica...
          </span>
        </div>
        <div className="ml-[17px] flex h-[39px] w-[130px] items-center justify-center border-2 border-[#b8b8b8] bg-[#e1e1e1]">
          <span>
            <u className="underline-offset-[3px]">E</u>limina
          </span>
        </div>
        <div className="ml-[389px] flex h-[37px] w-[128px] items-center justify-center border-2 border-[#b8b8b8] bg-[#e1e1e1] pt-[1px] pr-[4px]">
          <span>
            <u className="underline-offset-[3px]">F</u>iltro
          </span>
          <Caret className="ml-[6px]" />
        </div>
      </div>

      <div className="mt-[6px] ml-[9px] flex h-[502px] w-[943px] shrink-0 flex-col border-2 border-[#a9abb3] bg-white">
        <div className="flex h-[45px] shrink-0 items-center pt-[1px] whitespace-nowrap">
          <div className="flex h-full w-[201px] items-center border-r-2 border-[#e4e4e4] pl-[12px]">
            Nome
          </div>
          <div className="flex h-full w-[210px] items-center border-r-2 border-[#e4e4e4] pl-[11px]">
            Valore
          </div>
          <div className="flex h-full w-[210px] items-center border-r-2 border-[#e4e4e4] pl-[11px]">
            Riferito a
          </div>
          <div className="flex h-full w-[116px] items-center border-r-2 border-[#e4e4e4] pl-[10px]">
            Ambito
          </div>
          <div className="pl-[10px] text-[19px]">Commento</div>
        </div>
        <div className="flex h-[29px] shrink-0 items-center">
          <svg
            width="24"
            height="18"
            viewBox="0 0 24 18"
            className="mr-[4px] mb-[3px] ml-[9px]"
          >
            <path
              d="M6 1h15q2 0 2 2v12q0 2-2 2H6L1 12V6z"
              fill="#79aab8"
              stroke="#5b8793"
            />
            <path
              d="M9 5h11M9 9h11M9 13h11"
              stroke="#4f8296"
              strokeWidth="1.500"
            />
          </svg>
          <div className="flex h-full w-[900px] items-center border border-dotted border-[#b08a55] bg-[#3274d0] pl-[3px] whitespace-nowrap text-[#d3e9ff]">
            <span className="w-[171px]">CustRange</span>
            <span className="w-[211px]">{"{...}"}</span>
            <span className="w-[210px] text-[19.500px]">
              =SCARTO(Foglio1!$...
            </span>
            <span>Cartella ...</span>
          </div>
        </div>
      </div>

      <div className="mt-[5px] ml-[10px] h-[28px] leading-[26px]">
        R<u className="underline-offset-[3px]">i</u>ferito a:
      </div>
      <div className="mt-[1px] ml-[11px] flex shrink-0">
        <div className="flex h-[33px] w-[34px] items-center justify-center border-2 border-[#c2c2c2] bg-[#e1e1e1]">
          <svg width="26" height="24" viewBox="0 0 26 24">
            <path d="M1 1l24 22M25 1L1 23" stroke="#aaa" strokeWidth="3" />
          </svg>
        </div>
        <div className="ml-[2px] flex h-[33px] w-[34px] items-center justify-center border-2 border-[#c2c2c2] bg-[#e1e1e1]">
          <svg width="24" height="22" viewBox="0 0 24 22" fill="none">
            <path d="M1 12l7 8L23 1" stroke="#b0b0b0" strokeWidth="3" />
          </svg>
        </div>
        <div className="ml-[17px] flex h-[35px] w-[853px] items-center justify-between border-2 border-[#b4b4b4] bg-white pl-[7px] whitespace-nowrap">
          <span className="pt-[1px] text-[19.450px]">
            =SCARTO(Foglio1!$C$4;1;;CONTA.VALORI(Foglio1!$C:$C)-1;1)
          </span>
          <div className="flex h-[33px] w-[38px] items-center justify-center border-2 border-[#9c9c9c] bg-[#f4f4f4]">
            <svg width="16" height="20" viewBox="0 0 16 20" fill="none">
              <path d="M0 8l8-8 8 8z" fill="#111" />
              <path d="M8 6v9M1 18.500h14" stroke="#111" strokeWidth="3" />
            </svg>
          </div>
        </div>
      </div>
      <div className="mt-[19px] ml-[820px] flex h-[39px] w-[130px] shrink-0 items-center justify-center border-2 border-[#b8b8b8] bg-[#e1e1e1]">
        Chiudi
      </div>
      <svg
        width="16"
        height="16"
        viewBox="0 0 16 16"
        className="absolute right-0 bottom-0"
      >
        <path d="M1 16L16 1M8 16l8-8" stroke="#8fa5ae" strokeWidth="2.500" />
      </svg>
    </div>
  );
}

export default function App() {
  return (
    <div className="relative h-[1668px] w-[2388px] overflow-hidden bg-black pt-[162px] [font-family:'Open_Sans',sans-serif]">
      <div className="flex h-[1341px] flex-col bg-[#e6e6e6]">
        <div className="flex shrink-0 flex-col bg-[#3d744b]">
          <TitleBar />
          <Tabs />
        </div>
        <Ribbon />
        <FormulaBar />
        <div className="flex h-[910px] shrink-0">
          <div className="flex w-[2355px] shrink-0 flex-col">
            <ColumnHeaders />
            <Sheet />
          </div>
          <div className="flex pt-[5px] pl-[5px]">
            <VerticalScroll />
          </div>
        </div>
        <SheetTabs />
        <StatusBar />
      </div>
      <div className="flex h-[3px] pl-[1165px]">
        <div className="w-[64px] bg-[#555]" />
        <div className="ml-[332px] w-[49px] bg-[#4c7f45]" />
      </div>

      <NamesDialog />

      {/* hand-drawn marker */}
      <svg
        width="260"
        height="120"
        viewBox="1530 330 260 120"
        fill="none"
        className="absolute top-[330px] left-[1530px]"
      >
        <path
          d="M1755 366C1738 361 1728 355 1710 351.500C1692 347 1675 345 1656 345C1636 345 1620 347 1603 350C1585 353 1572 355 1563 360C1550 366 1548 374 1548.500 382C1548 392 1548 398 1552 405C1556 414 1562 420 1570 424C1582 429 1596 429 1610 428.500C1628 427 1640 421 1657 418C1677 413 1700 412 1717 408C1738 403 1750 399 1760 393C1767 388 1770 385 1769 379C1769 371 1766 365 1762 360C1757 354 1752 354 1745 353"
          stroke="#000"
          strokeWidth="12"
        />
      </svg>
    </div>
  );
}
